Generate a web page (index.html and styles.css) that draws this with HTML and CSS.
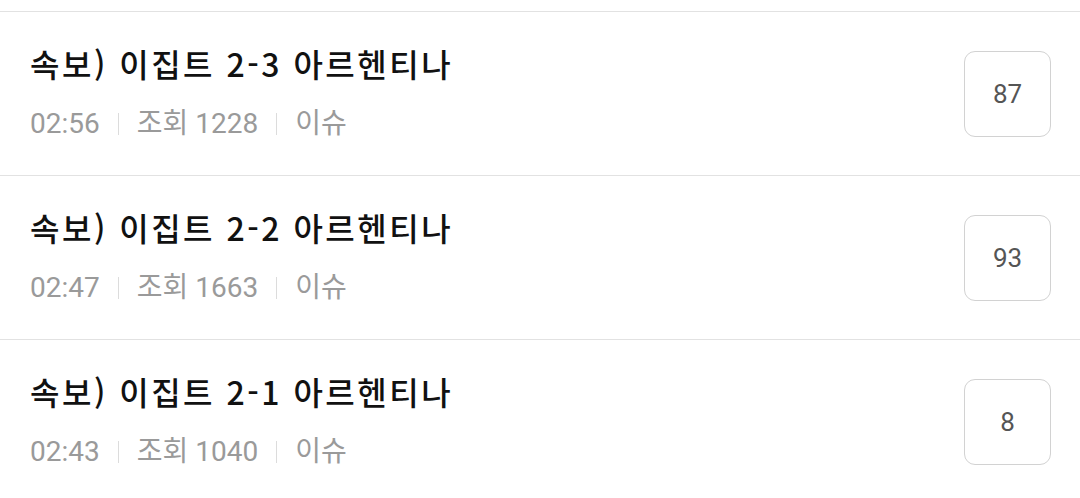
FILE: index.html
```html
<!DOCTYPE html>
<html lang="ko">
<head>
    <title>이슈 게시판</title>
    <meta charset="utf-8">
    <meta name="viewport" content="width=device-width, initial-scale=1">
    <link rel="stylesheet" href="styles.css">
</head>
<body>
<ul class="post-list">
    <li class="post">
        <div class="post-body">
            <div class="post-title">속보) 이집트 2-3 아르헨티나</div>
            <div class="post-meta">
                <span>02:56</span>
                <span class="sep"></span>
                <span>조회 1228</span>
                <span class="sep"></span>
                <span>이슈</span>
            </div>
        </div>
        <div class="comment-count">87</div>
    </li>
    <li class="post">
        <div class="post-body">
            <div class="post-title">속보) 이집트 2-2 아르헨티나</div>
            <div class="post-meta">
                <span>02:47</span>
                <span class="sep"></span>
                <span>조회 1663</span>
                <span class="sep"></span>
                <span>이슈</span>
            </div>
        </div>
        <div class="comment-count">93</div>
    </li>
    <li class="post">
        <div class="post-body">
            <div class="post-title">속보) 이집트 2-1 아르헨티나</div>
            <div class="post-meta">
                <span>02:43</span>
                <span class="sep"></span>
                <span>조회 1040</span>
                <span class="sep"></span>
                <span>이슈</span>
            </div>
        </div>
        <div class="comment-count">8</div>
    </li>
</ul>
</body>
</html>
```

FILE: styles.css
```css
* {
    box-sizing: border-box;
}

body {
    margin: 0;
    background-color: #fff;
    font-family: "Noto Sans CJK KR", "Noto Sans", sans-serif;
}

.post-list {
    list-style: none;
    margin: 11px 0 0;
    padding: 0;
}

.post {
    display: flex;
    align-items: center;
    height: 164px;
    padding: 0 29px 0 30px;
    border-top: 1.5px solid #e2e2e2;
}

.post-body {
    flex: 1;
}

.post-title {
    font-size: 32px;
    line-height: 40px;
    font-weight: 500;
    letter-spacing: 2.5px;
    color: #111;
}

.post-meta {
    display: flex;
    align-items: center;
    margin-top: 21px;
    font-family: "Roboto", "Noto Sans CJK KR", sans-serif;
    font-size: 28px;
    line-height: 40px;
    color: #9a9a9a;
}

.sep {
    width: 0;
    height: 22px;
    margin: 0 18px;
    border-left: 1.5px solid #dcdcdc;
}

.comment-count {
    width: 87px;
    height: 86px;
    display: flex;
    align-items: center;
    justify-content: center;
    border: 1.5px solid #d2d2d2;
    border-radius: 11px;
    font-family: "Roboto", sans-serif;
    font-size: 26px;
    color: #555;
}
```
